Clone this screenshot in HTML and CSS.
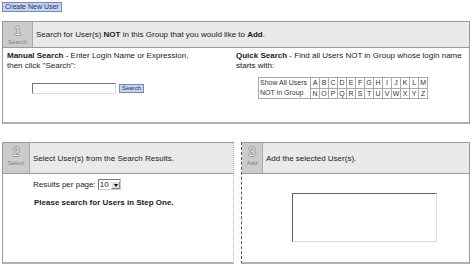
FILE: index.html
```html
<!DOCTYPE html>
<html>
	<head>
		<meta charset="utf-8">
		<title>Add Users to Group</title>
		<link rel="stylesheet" href="styles.css">
	</head>
	<body>
		<div class="page">
			<button type="button" class="btn btn-create">Create New User</button>

			<div class="step step-search">
				<div class="step__head">
					<div class="step__num"><span class="step__digit">1</span><span class="step__label">Search</span></div>
					<div class="step__title">Search for User(s) <b>NOT</b> in this Group that you would like to <b>Add</b>.</div>
				</div>
				<div class="step__body search">
					<div class="search__manual">
						<p><b>Manual Search</b> - Enter Login Name or Expression, then click "Search":</p>
						<div class="search__form">
							<input type="text" class="search__input">
							<button type="button" class="btn btn-search">Search</button>
						</div>
					</div>
					<div class="search__quick">
						<p><b>Quick Search</b> - Find all Users NOT in Group whose login name starts with:</p>
						<table class="letters">
							<tr>
								<td rowspan="2" class="letters__all">Show All Users<br>NOT in Group</td>
								<td>A</td><td>B</td><td>C</td><td>D</td><td>E</td><td>F</td><td>G</td><td>H</td><td>I</td><td>J</td><td>K</td><td>L</td><td>M</td>
							</tr>
							<tr>
								<td>N</td><td>O</td><td>P</td><td>Q</td><td>R</td><td>S</td><td>T</td><td>U</td><td>V</td><td>W</td><td>X</td><td>Y</td><td>Z</td>
							</tr>
						</table>
					</div>
				</div>
			</div>

			<div class="steps-row">
				<div class="step step-select">
					<div class="step__head">
						<div class="step__num"><span class="step__digit">2</span><span class="step__label">Select</span></div>
						<div class="step__title">Select User(s) from the Search Results.</div>
					</div>
					<div class="step__body select">
						<div class="select__per-page">
							Results per page:
							<span class="dropdown"><span class="dropdown__value">10</span><span class="dropdown__arrow"></span></span>
						</div>
						<p class="select__empty">Please search for Users in Step One.</p>
					</div>
				</div>
				<div class="step step-add">
					<div class="step__head">
						<div class="step__num"><span class="step__digit">3</span><span class="step__label">Add</span></div>
						<div class="step__title">Add the selected User(s).</div>
					</div>
					<div class="step__body add">
						<div class="add__list"></div>
					</div>
				</div>
			</div>
		</div>
	</body>
</html>
```

FILE: styles.css
```css
body { margin:0; background:#fff; color:#1a1a1a; font-family:"Liberation Sans", Arial, sans-serif; font-size:8px; }
p { margin:0; }
.page { width:468px; padding:2px 0 0 2px; }

.btn { display:block; margin:0; padding:0 2px; font-family:"Liberation Sans", Arial, sans-serif; font-size:7px; line-height:8px; color:#1f3470; background:#c6d3ec; border:1px solid #7488bd; }
.btn-create { height:10px; }

.step { border:1px solid #9a9a9a; border-bottom:2px solid #b0b0b0; background:#fff; }
.step-search { margin-top:9px; }
.step__head { display:flex; height:25px; border-bottom:1px solid #9a9a9a; background:repeating-conic-gradient(#e4e4e4 0 25%, #efefef 0 50%) 0 0/2px 2px; }
.step__num { display:flex; flex-direction:column; align-items:center; width:29px; border-right:1px solid #aaa; background:#cbcbcb; }
.step__digit { margin-top:3px; font-size:13px; line-height:12px; color:#e8e8e8; text-shadow:-1px 0 #999, 1px 0 #999, 0 -1px #999, 0 1px #999; }
.step__label { margin-top:2px; font-size:6px; color:#858585; }
.step__title { align-self:center; padding-left:3px; }

.search { display:flex; height:74px; }
.search__manual { width:225px; padding:3px 0 0 4px; line-height:10px; }
.search__manual p { width:195px; }
.search__form { display:flex; align-items:center; gap:3px; margin:12px 0 0 25px; }
.search__input { width:80px; height:7px; margin:0; padding:1px; border:1px solid #777; border-right-color:#ddd; border-bottom-color:#ddd; }
.btn-search { height:9px; padding:0 2px; font-size:6px; line-height:7px; }
.search__quick { flex:1; padding:3px 0 0 4px; line-height:10px; }
.search__quick p { width:228px; }

.letters { margin:6px 0 0 22px; border-collapse:collapse; font-size:7px; line-height:9px; color:#333; }
.letters td { padding:0; border:1px solid #aaa; text-align:center; width:8px; }
.letters .letters__all { width:auto; padding:0 3px 0 1px; text-align:left; line-height:10px; }

.steps-row { display:flex; gap:7px; margin-top:18px; }
.step-select, .step-add { height:119px; }
.step-select { width:231px; border-right:1px dotted #aaa; }
.step-add { width:228px; border-left:1px dashed #555; }
.step-select .step__head, .step-add .step__head { height:30px; }
.step-select .step__num { width:26px; }
.step-add .step__num { width:20px; }

.select { padding:5px 0 0 30px; }
.select__per-page { display:flex; align-items:center; gap:2px; }
.dropdown { display:flex; align-items:center; height:9px; border:1px solid #777; border-right-color:#ccc; border-bottom-color:#ccc; background:#fff; }
.dropdown__value { padding:0 2px 0 1px; font-size:8px; }
.dropdown__arrow { position:relative; width:9px; height:8px; background:#ddd; border:1px solid #fff; border-right-color:#888; border-bottom-color:#888; box-sizing:border-box; }
.dropdown__arrow:after { content:""; position:absolute; left:2px; top:2px; border:2px solid transparent; border-top:3px solid #000; border-bottom:0; }
.select__empty { margin:8px 0 0 1px; font-weight:bold; }

.add { padding:19px 0 0 50px; }
.add__list { width:143px; height:47px; border:1px solid #666; border-right-color:#ddd; border-bottom-color:#ddd; background:#fff; }
```
